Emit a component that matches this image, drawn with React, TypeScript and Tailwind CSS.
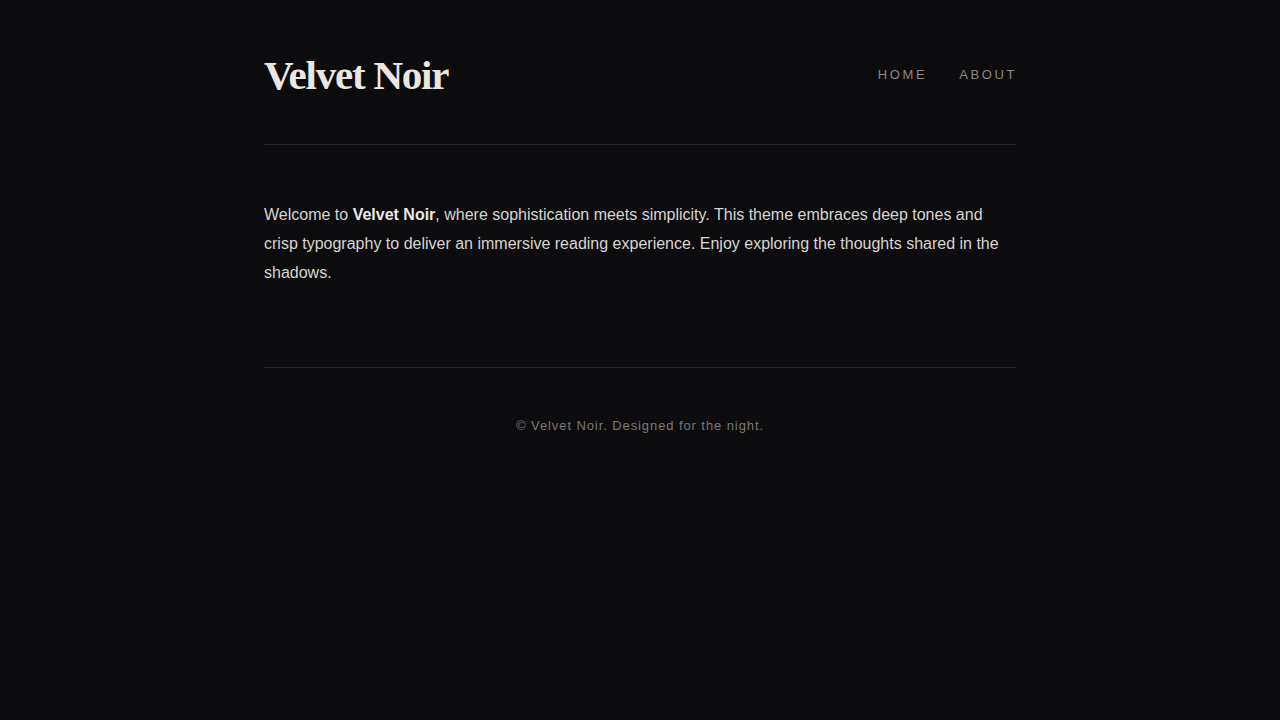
export default function App() {
  return (
    <div className="min-h-screen bg-[#0c0b0e] text-[#e8e4df]" style={{ fontFamily: '"Liberation Sans", Arial, sans-serif' }}>
      <div className="mx-auto w-[752px]">
        <header className="flex items-center justify-between border-b border-[#26252a] pt-[51px] pb-[45px]">
          <h1
            className="text-[41px] leading-[48px] font-bold tracking-[-0.03em] text-[#ebe7e0]"
            style={{ fontFamily: '"Liberation Serif", "Times New Roman", serif' }}
          >
            Velvet Noir
          </h1>
          <nav className="flex gap-8 text-[13px] uppercase tracking-[0.2em] text-[#8c8782]">
            <a href="#">Home</a>
            <a href="#" className="-mr-px">About</a>
          </nav>
        </header>

        <main className="pt-[55px] pb-20 border-b border-[#26252a]">
          <p className="text-[16px] leading-[29px] text-[#d9d5d0]">
            Welcome to <strong className="font-bold text-[#ece8e2]">Velvet Noir</strong>, where sophistication meets
            simplicity. This theme embraces deep tones and crisp typography to deliver an immersive reading
            experience. Enjoy exploring the thoughts shared in the shadows.
          </p>
        </main>

        <footer className="pt-12 text-center text-[13px] leading-5 tracking-[0.07em] text-[#7d7873]">
          © Velvet Noir. Designed for the night.
        </footer>
      </div>
    </div>
  );
}
